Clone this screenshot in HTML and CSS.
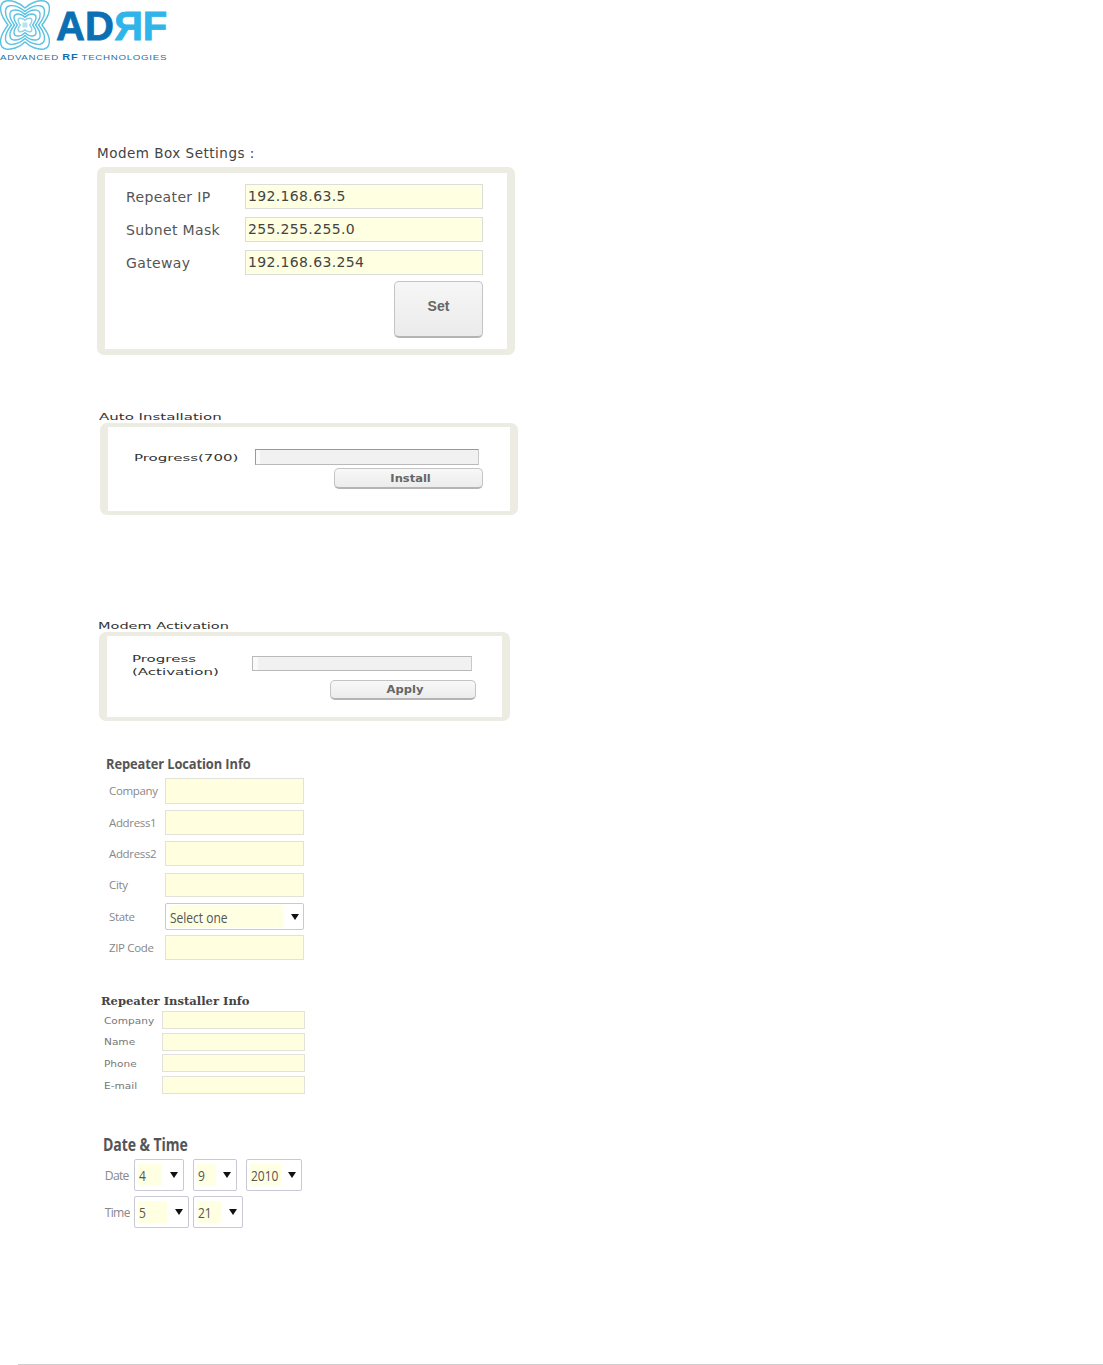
FILE: index.html
```html
<!DOCTYPE html>
<html lang="en">
<head>
<meta charset="utf-8">
<title>Modem settings</title>
<link rel="stylesheet" href="styles.css">
</head>
<body>
<header class="logo">
  <svg class="logo-mark" viewBox="-25 -25 50 50" width="50" height="50" aria-hidden="true">
    <defs>
      <path id="lobes" vector-effect="non-scaling-stroke" d="M0 -17C-5 -22 -13 -25 -19 -24C-24 -23 -25 -18 -24 -13C-23 -8 -20 -4 -17 0C-20 4 -23 8 -24 13C-25 18 -24 23 -19 24C-13 25 -5 22 0 17C5 22 13 25 19 24C24 23 25 18 24 13C23 8 20 4 17 0C20 -4 23 -8 24 -13C25 -18 24 -23 19 -24C13 -25 5 -22 0 -17Z"/>
    </defs>
    <g fill="none" stroke="#5cc2e2" stroke-width="1.400">
      <use href="#lobes"/>
      <use href="#lobes" transform="scale(.8)"/>
      <use href="#lobes" transform="scale(.62)"/>
      <use href="#lobes" transform="scale(.45)"/>
      <use href="#lobes" transform="scale(.28)" stroke="#8fd3ea"/>
    </g>
    <rect x="-2.500" y="-2.500" width="5" height="5" fill="#b5e3f2"/>
  </svg>
  <div class="logo-word"><span class="logo-ad">AD</span><span class="logo-r">R</span><span class="logo-f">F</span></div>
  <div class="logo-tag"><span class="logo-tag-in">ADVANCED <b>RF</b> TECHNOLOGIES</span></div>
</header>

<main>
  <section class="modem">
    <h2 class="modem-title">Modem Box Settings :</h2>
    <div class="panel modem-panel">
      <div class="ip-row"><span class="ip-label">Repeater IP</span><div class="ip-field">192.168.63.5</div></div>
      <div class="ip-row"><span class="ip-label">Subnet Mask</span><div class="ip-field">255.255.255.0</div></div>
      <div class="ip-row"><span class="ip-label">Gateway</span><div class="ip-field">192.168.63.254</div></div>
      <div class="btn set-btn">Set</div>
    </div>
  </section>

  <section class="auto">
    <h2 class="wide-title"><span class="stretch t-auto">Auto Installation</span></h2>
    <div class="panel auto-panel">
      <div class="progress-row">
        <span class="progress-label"><span class="stretch">Progress(700)</span></span>
        <div class="bar auto-bar"></div>
      </div>
      <div class="btn wide-btn auto-btn"><span class="stretch-btn">Install</span></div>
    </div>
  </section>

  <section class="activation">
    <h2 class="wide-title"><span class="stretch t-act">Modem Activation</span></h2>
    <div class="panel act-panel">
      <div class="progress-row act-row">
        <span class="progress-label"><span class="stretch">Progress</span><br><span class="stretch">(Activation)</span></span>
        <div class="bar act-bar"></div>
      </div>
      <div class="btn wide-btn act-btn"><span class="stretch-btn">Apply</span></div>
    </div>
  </section>

  <section class="location">
    <h2 class="tahoma-title"><span class="squeeze">Repeater Location Info</span></h2>
    <div class="loc-row r26"><span class="loc-label">Company</span><div class="field"></div></div>
    <div class="loc-row r25"><span class="loc-label">Address1</span><div class="field"></div></div>
    <div class="loc-row r25 gap7"><span class="loc-label">Address2</span><div class="field"></div></div>
    <div class="loc-row r24"><span class="loc-label">City</span><div class="field"></div></div>
    <div class="loc-row r27"><span class="loc-label">State</span>
      <div class="select sel-state"><span class="sel-value"><span class="squeeze-v">Select one</span></span><i class="caret"></i></div>
    </div>
    <div class="loc-row r25"><span class="loc-label">ZIP Code</span><div class="field"></div></div>
  </section>

  <section class="installer">
    <h2 class="installer-title"><span class="stretch-b">Repeater Installer Info</span></h2>
    <div class="inst-row"><span class="inst-label"><span class="stretch">Company</span></span><div class="field"></div></div>
    <div class="inst-row"><span class="inst-label"><span class="stretch">Name</span></span><div class="field"></div></div>
    <div class="inst-row"><span class="inst-label"><span class="stretch">Phone</span></span><div class="field"></div></div>
    <div class="inst-row"><span class="inst-label"><span class="stretch">E-mail</span></span><div class="field"></div></div>
  </section>

  <section class="datetime">
    <h2 class="tahoma-title date-title"><span class="squeeze date-squeeze">Date &amp; Time</span></h2>
    <div class="dt-row">
      <span class="dt-label">Date</span>
      <div class="select s-month"><span class="sel-value v-month"><span class="squeeze-v">4</span></span><i class="caret"></i></div>
      <div class="select s-day"><span class="sel-value v-day"><span class="squeeze-v">9</span></span><i class="caret"></i></div>
      <div class="select s-year"><span class="sel-value v-year"><span class="squeeze-v">2010</span></span><i class="caret"></i></div>
    </div>
    <div class="dt-row">
      <span class="dt-label">Time</span>
      <div class="select s-hour"><span class="sel-value v-hour"><span class="squeeze-v">5</span></span><i class="caret"></i></div>
      <div class="select s-min"><span class="sel-value v-min"><span class="squeeze-v">21</span></span><i class="caret"></i></div>
    </div>
  </section>
</main>

<footer class="foot"></footer>
</body>
</html>
```

FILE: styles.css
```css
* { box-sizing: border-box; }
html, body { margin: 0; padding: 0; }
body { width: 1103px; height: 1365px; background: #fff; overflow: hidden; color: #333; font-family: "DejaVu Sans", sans-serif; display: flex; flex-direction: column; }
h2 { margin: 0; font-weight: normal; }

/* logo */
.logo { height: 60px; width: 170px; position: relative; flex: none; }
.logo-mark { display: block; }
.logo-word { position: absolute; left: 56px; top: 3px; font: bold 40px/46px "Liberation Sans", sans-serif; white-space: nowrap; display: flex; -webkit-text-stroke: 0.8px currentColor; }
.logo-ad { color: #0b6fb3; }
.logo-r { color: #2fb5ea; display: inline-block; transform: scaleX(-1); }
.logo-f { color: #2fb5ea; }
.logo-tag { position: absolute; left: 0; top: 53px; white-space: nowrap; color: #1c6fa8; font: 8px/9px "Liberation Sans", sans-serif; }
.logo-tag-in { display: inline-block; transform: scaleX(1.21); transform-origin: left center; letter-spacing: 0.6px; }
.logo-tag b { color: #0b6fb3; font-size: 9px; }

/* shared panels */
.panel { background: #fff; border-style: solid; border-color: #ecece3; border-width: 4px 8px; border-radius: 7px; }
.stretch, .stretch-b, .stretch-btn, .squeeze, .squeeze-v { display: inline-block; transform-origin: left center; white-space: nowrap; }
.squeeze { transform: scaleX(0.92); }
.squeeze.date-squeeze { transform: scaleX(0.78); }
.squeeze-v { transform: scaleX(0.8); }
.btn { background: linear-gradient(#f8f8f8, #ececec); border: 1px solid #c4c4c4; border-bottom: 2px solid #b4b4b4; border-radius: 5px; display: flex; align-items: center; justify-content: center; color: #666; font-weight: bold; }

/* modem box */
.modem { margin: 84px 0 0 97px; width: 418px; }
.modem-title { font-size: 13.500px; letter-spacing: 0.5px; line-height: 18px; color: #444; height: 23px; white-space: nowrap; }
.modem-panel { border-width: 6px 8px; height: 188px; padding: 11px 24px 0 13px; display: flex; flex-direction: column; }
.ip-row { display: flex; align-items: center; height: 25px; margin-bottom: 8px; }
.ip-label { width: 127px; padding-left: 8px; font-size: 14px; letter-spacing: 0.35px; color: #555; flex: none; white-space: nowrap; }
.ip-field { flex: 1; height: 25px; background: #ffffe2; border: 1px solid #dcdcd8; font-size: 14px; line-height: 23px; padding-left: 2px; color: #444; letter-spacing: 0.35px; }
.set-btn { width: 89px; height: 57px; margin: -2px 0 0 auto; font-size: 14px; font-family: "Liberation Sans", sans-serif; background: linear-gradient(#f6f6f6, #ebebeb); padding-bottom: 6px; }

/* progress panels */
.wide-title { font-size: 10px; line-height: 9px; height: 11px; color: #333; }
.t-auto { transform: scale(1.5, 0.9); }
.t-act { transform: scale(1.45, 0.9); }
.auto { margin: 57px 0 0 99px; width: 419px; }
.auto-panel { margin-left: 1px; height: 92px; padding: 22px 27px 0 26px; }
.progress-row { display: flex; align-items: center; }
.progress-label { font-size: 10px; line-height: 13px; color: #333; flex: none; }
.progress-label .stretch { transform: scale(1.5, 0.95); }
.auto-panel .progress-label { width: 121px; }
.bar { height: 16px; background: #f1f1f1; border: 1px solid #b9b9b9; border-right-color: #c9c9c9; box-shadow: inset 4px 0 0 #fafafa; }
.auto-bar { width: 224px; border-top-color: #999; border-left-color: #999; }
.wide-btn { font-size: 10px; padding-left: 4px; }
.stretch-btn { transform-origin: center; transform: scaleX(1.15); }
.auto-btn { width: 149px; height: 21px; margin: 3px 0 0 200px; }

.activation { margin: 106px 0 0 98px; width: 412px; }
.act-panel { margin-left: 1px; height: 89px; padding: 16px 30px 0 25px; }
.act-panel .progress-label { width: 120px; }
.act-row { align-items: flex-start; }
.act-bar { width: 220px; height: 15px; margin-top: 4px; box-shadow: inset 5px 0 0 #fafafa; }
.act-btn { width: 146px; height: 20px; margin: 2px 0 0 198px; }

/* yellow form fields */
.field { background: #ffffe0; border: 1px solid #e2e2da; }

/* location */
.location { margin: 34px 0 0 106px; width: 198px; }
.tahoma-title { font: bold 14px/18px "Open Sans", "Liberation Sans", sans-serif; color: #555; letter-spacing: -0.1px; white-space: nowrap; }
.location .tahoma-title { height: 23px; margin-top: 1px; }
.loc-row { display: flex; align-items: center; margin-bottom: 6px; }
.loc-row .field { flex: 1; height: 100%; }
.r26 { height: 26px; margin-bottom: 6px; }
.r25 { height: 25px; }
.gap7 { margin-bottom: 7px; }
.r24 { height: 24px; margin-bottom: 6px; }
.r27 { height: 27px; margin-bottom: 5px; }
.loc-label { width: 59px; flex: none; padding-left: 3px; font: 11.500px/16px "Open Sans", sans-serif; color: #888; letter-spacing: -0.35px; white-space: nowrap; }

/* selects */
.select { display: flex; align-items: center; justify-content: space-between; background: #fff; border: 1px solid #c9c9d6; border-radius: 2px; padding: 1px 5px 1px 3px; }
.sel-value { background: #ffffe2; display: flex; align-items: center; height: 100%; font: 15px/18px "Open Sans", sans-serif; color: #555; padding-left: 1px; white-space: nowrap; }
.caret { width: 0; height: 0; border-left: 4.500px solid transparent; border-right: 4.500px solid transparent; border-top: 6px solid #111; flex: none; }
.sel-state { flex: 1; height: 100%; padding-right: 4px; }
.sel-state .sel-value { width: 114px; }

/* installer */
.installer { margin: 37px 0 0 101px; width: 204px; }
.installer-title { font: bold 11px/12px "DejaVu Serif", serif; height: 15px; color: #444; margin-top: -1px; }
.stretch-b { transform: scaleX(1.05); }
.inst-row { display: flex; align-items: center; height: 18px; margin-bottom: 3.700px; padding-left: 3px; }
.inst-row .field { flex: 1; height: 100%; }
.inst-label { width: 58px; flex: none; font-size: 8px; line-height: 10px; color: #777; padding-top: 3px; }
.inst-label .stretch { transform: scaleX(1.32); }

/* date & time */
.datetime { margin: 40px 0 0 103px; }
.date-title { font-size: 18px; line-height: 20px; height: 25px; }
.dt-row { display: flex; align-items: center; height: 32px; margin-top: 5px; }
.dt-row:first-of-type { margin-top: 0; }
.dt-label { width: 31px; flex: none; padding-left: 2px; font: 13.500px/18px "Open Sans", sans-serif; color: #888; letter-spacing: -0.8px; transform: scaleX(0.9); transform-origin: left center; white-space: nowrap; }
.select.s-month, .select.s-day, .select.s-year, .select.s-hour, .select.s-min { height: 32px; padding-top: 4px; padding-bottom: 4px; margin-right: 9px; }
.s-month { width: 50px; }
.s-day { width: 44px; }
.s-year { width: 56px; }
.select.s-hour { width: 55px; margin-right: 4px; }
.s-min { width: 50px; }
.v-month { width: 24px; }
.v-day { width: 19px; }
.v-year { width: 31px; }
.v-hour { width: 29px; }
.v-min { width: 24px; }

/* footer rule */
.foot { margin: auto 0 0 18px; height: 1px; background: #cfcfcf; flex: none; }
```
